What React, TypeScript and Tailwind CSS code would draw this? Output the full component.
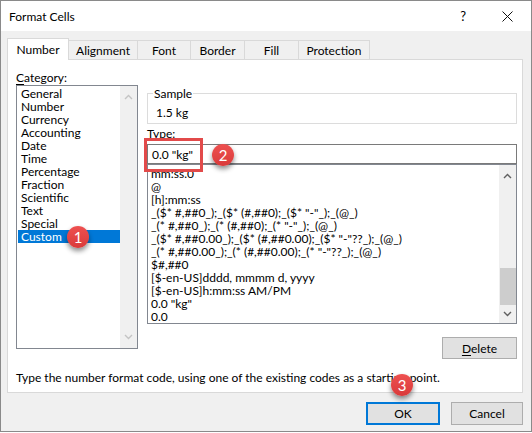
import * as React from 'react';

const categories = [
  'General',
  'Number',
  'Currency',
  'Accounting',
  'Date',
  'Time',
  'Percentage',
  'Fraction',
  'Scientific',
  'Text',
  'Special',
  'Custom',
];

const formats = [
  'mm:ss.0',
  '@',
  '[h]:mm:ss',
  '_($* #,##0_);_($* (#,##0);_($* "-"_);_(@_)',
  '_(* #,##0_);_(* (#,##0);_(* "-"_);_(@_)',
  '_($* #,##0.00_);_($* (#,##0.00);_($* "-"??_);_(@_)',
  '_(* #,##0.00_);_(* (#,##0.00);_(* "-"??_);_(@_)',
  '$#,##0',
  '[$-en-US]dddd, mmmm d, yyyy',
  '[$-en-US]h:mm:ss AM/PM',
  '0.0 "kg"',
  '0.0',
];

const tabs = [
  { label: 'Number', w: 'w-[62px]' },
  { label: 'Alignment', w: 'w-[70px]' },
  { label: 'Font', w: 'w-[54px]' },
  { label: 'Border', w: 'w-[55px]' },
  { label: 'Fill', w: 'w-[55px]' },
  { label: 'Protection', w: 'w-[72px]' },
];

function Chevron({ up, color }: { up?: boolean; color: string }) {
  return (
    <svg width="9" height="6" viewBox="0 0 9 6" className={up ? '' : 'rotate-180'}>
      <path d="M1 5 L4.5 1.5 L8 5" fill="none" stroke={color} strokeWidth="1.4" />
    </svg>
  );
}

function Badge({ n, className }: { n: number; className: string }) {
  return (
    <div
      className={`absolute w-[22px] h-[22px] rounded-full bg-gradient-to-b from-[#ee5050] to-[#d93a3a] text-white text-[15px] leading-[22px] text-center shadow-[0_3px_5px_rgba(0,0,0,0.45)] ${className}`}
    >
      {n}
    </div>
  );
}

export default function App() {
  return (
    <div className="relative w-[532px] h-[432px] border border-[#8a8a8a] bg-[#f0f0f0] text-[12px] text-black font-['Lato',sans-serif] overflow-hidden">
      {/* Title bar */}
      <div className="h-[30px] bg-white flex items-center pl-[8px]">
        <span className="leading-[15px]">Format Cells</span>
        <span className="ml-auto text-[13px] leading-[15px] mr-[36px]">?</span>
        <svg width="11" height="11" viewBox="0 0 11 11" className="mr-[18px]">
          <path d="M0.5 0.5 L10.5 10.5 M10.5 0.5 L0.5 10.5" stroke="#111" strokeWidth="1" />
        </svg>
      </div>

      {/* Body */}
      <div className="pt-[7px] pl-[6px]">
        {/* Tabs */}
        <div className="flex items-end h-[21px]">
          {tabs.map((t, i) =>
            i === 0 ? (
              <div
                key={t.label}
                className={`${t.w} h-[22px] -mb-px relative z-10 bg-white border border-b-0 border-[#d9d9d9] flex items-center justify-center leading-[15px]`}
              >
                {t.label}
              </div>
            ) : (
              <div
                key={t.label}
                className={`${t.w} h-[19px] -ml-px bg-[#f0f0f0] border border-b-0 border-[#d9d9d9] flex items-center justify-center leading-[15px]`}
              >
                {t.label}
              </div>
            )
          )}
        </div>

        {/* Panel */}
        <div className="w-[516px] h-[334px] bg-white border border-[#d9d9d9] flex flex-col">
          <div className="flex pl-[8px]">
            {/* Category */}
            <div className="w-[122px] pt-[10px] flex flex-col">
              <div className="h-[15px] leading-[15px]">
                <span className="underline underline-offset-2">C</span>ategory:
              </div>
              <div className="h-[264px] border border-[#828790] flex">
                <div className="flex-1 pt-[1px] pl-[1px]">
                  {categories.map((c) => (
                    <div
                      key={c}
                      className={`h-[13px] leading-[13px] pl-[3px] ${c === 'Custom' ? 'bg-[#0078d7] text-white' : ''}`}
                    >
                      {c}
                    </div>
                  ))}
                </div>
                <div className="w-[17px] bg-[#f0f0f0] flex flex-col items-center justify-between py-[8px]">
                  <Chevron up color="#c4c4c4" />
                  <Chevron color="#c4c4c4" />
                </div>
              </div>
            </div>

            {/* Right column */}
            <div className="w-[370px] ml-[9px] pt-[33px] flex flex-col">
              <div className="relative h-[31px] border border-[#dcdcdc] pl-[8px] pt-[11px]">
                <span className="absolute left-[5px] top-[-8px] bg-white px-[1px] leading-[15px]">Sample</span>
                <div className="leading-[15px]">1.5 kg</div>
              </div>
              <div className="mt-[2px] h-[15px] leading-[15px]">
                <span className="underline underline-offset-2">T</span>ype:
              </div>
              <div className="mt-[3px] h-[20px] border border-[#7a7a7a] pl-[4px] flex items-center leading-[15px]">
                0.0 "kg"
              </div>
              <div className="h-[160px] border border-[#828790] flex">
                <div className="flex-1 pt-[2px] pl-[3px] overflow-hidden whitespace-nowrap">
                  {formats.map((f) => (
                    <div key={f} className="h-[13px] leading-[13px]">
                      {f}
                    </div>
                  ))}
                </div>
                <div className="w-[17px] bg-[#f0f0f0] flex flex-col items-center pt-[8px] pb-[6px]">
                  <Chevron up color="#606060" />
                  <div className="mt-auto w-[16px] h-[37px] bg-[#cdcdcd]" />
                  <div className="mt-[6px]">
                    <Chevron color="#606060" />
                  </div>
                </div>
              </div>
              <button className="self-end mt-[13px] w-[75px] h-[22px] bg-[#e1e1e1] border border-[#adadad] leading-[15px]">
                <span className="underline underline-offset-2">D</span>elete
              </button>
            </div>
          </div>
          <div className="mt-[11px] pl-[8px] leading-[15px]">
            Type the number format code, using one of the existing codes as a starting point.
          </div>
        </div>

        {/* Buttons */}
        <div className="mt-[9px] flex justify-end gap-[11px] pr-[8px]">
          <button className="w-[74px] h-[23px] bg-[#e1e1e1] border-2 border-[#0078d7] leading-[15px]">OK</button>
          <button className="w-[72px] h-[23px] bg-[#e1e1e1] border border-[#adadad] leading-[15px]">Cancel</button>
        </div>
      </div>

      {/* Annotations */}
      <div className="absolute left-[143px] top-[137px] w-[59px] h-[34px] border-[3px] border-[#e24a4a]" />
      <Badge n={1} className="left-[66px] top-[225px]" />
      <Badge n={2} className="left-[211px] top-[143px]" />
      <Badge n={3} className="left-[390px] top-[373px]" />
    </div>
  );
}
